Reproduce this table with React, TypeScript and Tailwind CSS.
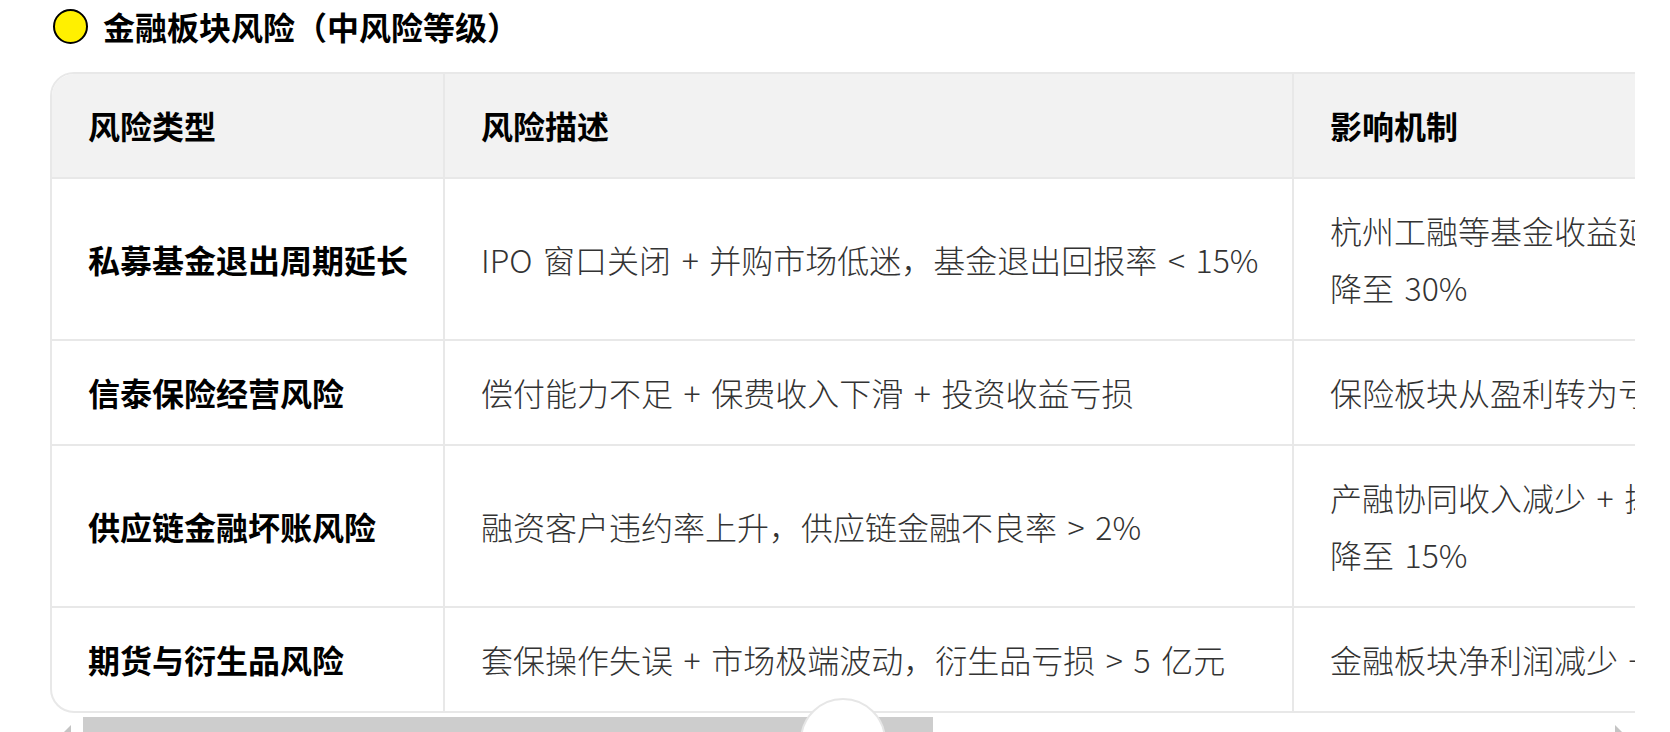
import React from "react";

interface RiskRow {
  type: string;
  desc: string;
  effect: string;
}

const rows: RiskRow[] = [
  {
    type: "私募基金退出周期延长",
    desc: "IPO 窗口关闭 + 并购市场低迷，基金退出回报率 < 15%",
    effect: "杭州工融等基金收益延迟确认，投资收益率\n降至 30%",
  },
  {
    type: "信泰保险经营风险",
    desc: "偿付能力不足 + 保费收入下滑 + 投资收益亏损",
    effect: "保险板块从盈利转为亏损，拖累集团利润",
  },
  {
    type: "供应链金融坏账风险",
    desc: "融资客户违约率上升，供应链金融不良率 > 2%",
    effect: "产融协同收入减少 + 拨备计提增加，利润率\n降至 15%",
  },
  {
    type: "期货与衍生品风险",
    desc: "套保操作失误 + 市场极端波动，衍生品亏损 > 5 亿元",
    effect: "金融板块净利润减少 + 衍生品亏损计提",
  },
];

const cell = "border-[#e8e8e8] px-9 py-[23px] leading-[57px]";

function Triangle({ dir }: { dir: "left" | "right" }) {
  return (
    <svg width="8" height="8" viewBox="0 0 8 8" className="mt-[8px]">
      {dir === "left" ? (
        <polygon points="8,0 8,8 0,8" fill="#c4c4c4" />
      ) : (
        <polygon points="0,0 8,8 0,8" fill="#c4c4c4" />
      )}
    </svg>
  );
}

export default function App() {
  return (
    <div className="relative h-[732px] w-[1670px] overflow-hidden bg-white font-['Noto_Sans_CJK_SC','Noto_Sans',sans-serif]">
      <div className="pl-[50px]">
        <div className="flex h-[52px] items-center gap-[15px] pl-[3px]">
          <span className="h-[35px] w-[35px] rounded-full border-2 border-black bg-[#fff000]" />
          <h3 className="text-[32px] font-bold leading-[40px] text-black">
            金融板块风险（中风险等级）
          </h3>
        </div>

        <div className="mt-[20px] w-[1585px] overflow-hidden">
          <div className="w-[1964px] overflow-hidden rounded-[24px] border-2 border-[#e8e8e8]">
            <div className="grid grid-cols-[393px_849px_718px] text-[32px]">
              <div className={`${cell} border-r-2 border-b-2 bg-[#f2f2f2] font-bold text-black`}>
                风险类型
              </div>
              <div className={`${cell} border-r-2 border-b-2 bg-[#f2f2f2] font-bold text-black`}>
                风险描述
              </div>
              <div className={`${cell} border-b-2 bg-[#f2f2f2] font-bold text-black`}>
                影响机制
              </div>

              {rows.map((r, i) => {
                const last = i === rows.length - 1;
                const rowBorder = last ? "" : "border-b-2";
                return (
                  <React.Fragment key={r.type}>
                    <div
                      className={`${cell} ${rowBorder} flex items-center whitespace-nowrap border-r-2 font-bold text-black`}
                    >
                      {r.type}
                    </div>
                    <div
                      className={`${cell} ${rowBorder} flex items-center whitespace-nowrap border-r-2 font-light text-[#333] [word-spacing:3.5px]`}
                    >
                      {r.desc}
                    </div>
                    <div
                      className={`${cell} ${rowBorder} flex items-center whitespace-pre font-light text-[#333] [word-spacing:3.5px]`}
                    >
                      {r.effect}
                    </div>
                  </React.Fragment>
                );
              })}
            </div>
          </div>
        </div>

        <div className="mt-[4px] flex h-[17px] w-[1585px]">
          <div className="flex w-[33px] justify-center">
            <Triangle dir="left" />
          </div>
          <div className="h-full w-[850px] bg-[#cdcdcd]" />
          <div className="flex-1" />
          <div className="flex w-[33px] justify-center">
            <Triangle dir="right" />
          </div>
        </div>
      </div>

      <div className="absolute left-[800px] top-[698px] h-[86px] w-[86px] rounded-full border-2 border-[#e6e6e6] bg-white" />
    </div>
  );
}
